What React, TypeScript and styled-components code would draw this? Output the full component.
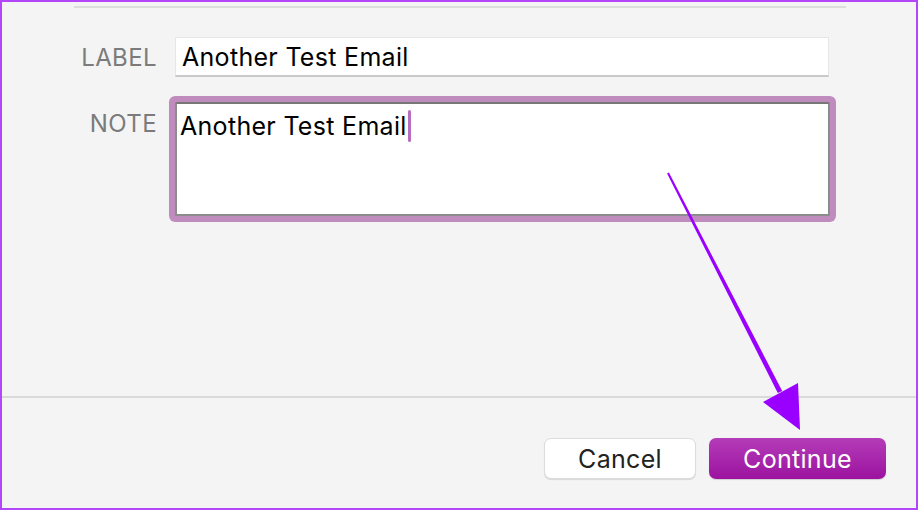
import React from "react";
import styled, { createGlobalStyle } from "styled-components";

const GlobalStyle = createGlobalStyle`
    html, body {
        margin: 0;
        padding: 0;
        background: #f3f4f3;
    }
    * {
        box-sizing: border-box;
    }
`

const Frame = styled.div`
    position: relative;
    width: 918px;
    height: 510px;
    border: 2px solid #b246f8;
    background: #f3f4f3;
    display: flex;
    flex-direction: column;
    font-family: Inter, "Liberation Sans", sans-serif;
    overflow: hidden;
`

const TopRule = styled.div`
    height: 2px;
    margin: 4px 70px 0 72px;
    background: #dcdedc;
`

const Form = styled.div`
    display: grid;
    grid-template-columns: 155px 654px;
    column-gap: 18px;
    row-gap: 25px;
    padding-top: 29px;
    height: 388px;
    align-content: start;
`

const FieldLabel = styled.div<{ $top?: boolean }>`
    justify-self: end;
    align-self: ${p => (p.$top ? "start" : "center")};
    padding-top: ${p => (p.$top ? "7px" : "0")};
    font-size: 24px;
    letter-spacing: 0.4px;
    color: #7b7b7b;
`

const TextInput = styled.div`
    height: 40px;
    background: #fff;
    border: 1px solid #e6e6e6;
    border-bottom: 2px solid #c9c9c9;
    padding: 0 0 0 6px;
    display: flex;
    align-items: center;
    font-size: 25px;
    letter-spacing: 0.3px;
    color: #000;
`

const NoteArea = styled.div`
    height: 114px;
    width: 655px;
    background: #fff;
    border: 2px solid #8c8c8c;
    border-top-color: #777;
    box-shadow: 0 0 0 6px #c08cbd;
    border-radius: 2px;
    padding: 7px 0 0 3px;
    font-size: 25px;
    letter-spacing: 0.3px;
    color: #000;
    display: flex;
    align-items: flex-start;
`

const Caret = styled.span`
    display: inline-block;
    width: 3px;
    height: 32px;
    margin-left: 1px;
    margin-top: -1px;
    border-radius: 2px;
    background: #b86ec0;
`

const BottomRule = styled.div`
    height: 2px;
    background: #d9dad9;
`

const Footer = styled.div`
    flex: 1;
    display: flex;
    justify-content: flex-end;
    align-items: flex-start;
    gap: 13px;
    padding: 40px 30px 0 0;
`

const Button = styled.button<{ $primary?: boolean }>`
    height: 41px;
    width: ${p => (p.$primary ? "177px" : "152px")};
    border-radius: 7px;
    font-family: inherit;
    font-size: 25px;
    letter-spacing: 0.3px;
    cursor: pointer;
    color: ${p => (p.$primary ? "#fff" : "#222")};
    background: ${p => (p.$primary ? "linear-gradient(#b43cb8, #9c13a0)" : "#fff")};
    border: ${p => (p.$primary ? "none" : "1px solid #dcdcdc")};
    box-shadow: ${p => (p.$primary ? "0 1px 1px rgba(0,0,0,0.15)" : "0 1px 1px rgba(0,0,0,0.12)")};
`

const Pointer = styled.svg`
    position: absolute;
    left: -2px;
    top: -2px;
    pointer-events: none;
`

const App = () => {
    return <>
        <GlobalStyle/>
        <Frame>
            <TopRule/>
            <Form>
                <FieldLabel>LABEL</FieldLabel>
                <TextInput>Another Test Email</TextInput>
                <FieldLabel $top>NOTE</FieldLabel>
                <NoteArea>Another Test Email<Caret/></NoteArea>
            </Form>
            <BottomRule/>
            <Footer>
                <Button>Cancel</Button>
                <Button $primary>Continue</Button>
            </Footer>
            {/* annotation arrow drawn over the dialog */}
            <Pointer width="918" height="510" viewBox="0 0 918 510">
                <polygon points="668.9,172.5 667.1,173.5 777.8,393.1 782.2,390.9" fill="#9a00ff"/>
                <polygon points="763,402 798,383 800,430" fill="#9a00ff"/>
            </Pointer>
        </Frame>
    </>
}

export default App
